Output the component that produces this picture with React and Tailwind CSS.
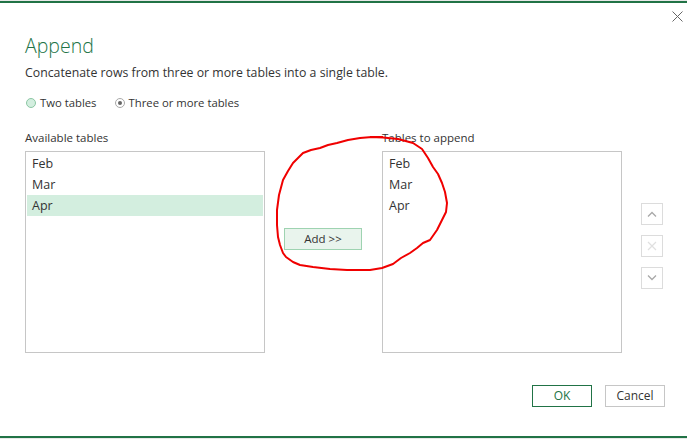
import React from "react";

const font = { fontFamily: '"Open Sans", "Noto Sans", sans-serif' };

function ListBox({ items, selected }) {
  return (
    <div className="h-[202px] w-[240px] border border-[#c6c6c6] bg-white px-[1px] pt-[1px]">
      {items.map((it) => (
        <div
          key={it}
          className={`h-[21px] pl-[5px] text-[12.5px] leading-[21px] text-[#333] ${
            it === selected ? "bg-[#d3eedf]" : ""
          }`}
        >
          {it}
        </div>
      ))}
    </div>
  );
}

function SideButton({ children }) {
  return (
    <div className="flex h-[22px] w-[22px] items-center justify-center border border-[#dcdcdc] bg-white">
      {children}
    </div>
  );
}

export default function App() {
  return (
    <div className="relative h-[439px] w-[687px] overflow-hidden bg-white" style={font}>
      {/* top edge */}
      <div className="h-[1px] bg-[#e8e8e8]" />
      <div className="h-[2px] bg-[#217346]" />

      {/* close */}
      <svg className="absolute left-[672px] top-[11px]" width="11" height="11" viewBox="0 0 11 11">
        <path d="M0.5 0.5 L10.5 10.5 M10.5 0.5 L0.5 10.5" stroke="#666" strokeWidth="1" />
      </svg>

      <div className="px-[25px]">
        <div className="mt-[29px] text-[19.5px] font-light leading-[28px] text-[#217346]">Append</div>
        <div className="mt-[4px] text-[12.3px] leading-[18px] text-[#333]">
          Concatenate rows from three or more tables into a single table.
        </div>

        <div className="mt-[12px] flex items-center text-[11.3px] leading-[18px] text-[#333]">
          <span className="ml-[1px] mr-[4px] inline-block h-[10px] w-[10px] rounded-full border border-[#8cc7a4] bg-[#d3eedf]" />
          <span>Two tables</span>
          <span className="ml-[18px] mr-[4px] flex h-[10px] w-[10px] items-center justify-center rounded-full border border-[#a8a8a8] bg-white">
            <span className="h-[4px] w-[4px] rounded-full bg-[#666]" />
          </span>
          <span>Three or more tables</span>
        </div>

        <div className="mt-[17px] flex">
          <div>
            <div className="mb-[5px] text-[11.5px] leading-[17px] text-[#333]">Available tables</div>
            <ListBox items={["Feb", "Mar", "Apr"]} selected="Apr" />
          </div>
          <div className="ml-[19px] pt-[99px]">
            <div className="flex h-[22px] w-[78px] items-center justify-center border border-[#9ed3b1] bg-[#e9f4ed] text-[11.5px] text-[#333]">
              Add &gt;&gt;
            </div>
          </div>
          <div className="ml-[20px]">
            <div className="mb-[5px] text-[11.5px] leading-[17px] text-[#333]">Tables to append</div>
            <ListBox items={["Feb", "Mar", "Apr"]} />
          </div>
          <div className="ml-[19px] flex flex-col gap-[10px] pt-[74px]">
            <SideButton>
              <svg width="10" height="6" viewBox="0 0 10 6">
                <path d="M1 5.5 L5 1.5 L9 5.5" fill="none" stroke="#a8a8a8" strokeWidth="1.3" />
              </svg>
            </SideButton>
            <SideButton>
              <svg width="10" height="10" viewBox="0 0 10 10">
                <path d="M1 1 L9 9 M9 1 L1 9" stroke="#e0e0e0" strokeWidth="1.2" />
              </svg>
            </SideButton>
            <SideButton>
              <svg width="10" height="6" viewBox="0 0 10 6">
                <path d="M1 0.5 L5 4.5 L9 0.5" fill="none" stroke="#a8a8a8" strokeWidth="1.3" />
              </svg>
            </SideButton>
          </div>
        </div>

        <div className="mt-[32px] flex justify-end gap-[13px]">
          <div className="flex h-[22px] w-[60px] items-center justify-center border border-[#217346] text-[12px] text-[#217346]">
            OK
          </div>
          <div className="mr-[-3px] flex h-[22px] w-[60px] items-center justify-center border border-[#c6c6c6] text-[12px] text-[#333]">
            Cancel
          </div>
        </div>
      </div>

      {/* bottom edge */}
      <div className="absolute left-0 top-[436px] h-[2px] w-full bg-[#217346]" />
      <div className="absolute left-0 top-[438px] h-[1px] w-full bg-[#e8e8e8]" />

      {/* red freehand annotation */}
      <svg className="pointer-events-none absolute left-0 top-0" width="687" height="439" viewBox="0 0 687 439">
        <path
          d="M370 137 L383 137.5 L398 139 L413 143 L422 149 L428 158 L433 167 L438 174 L442 183 L445 192 L447 203 L446 212 L442 220 L437 230 L430 240 L423 243 L417 248 L410 253 L401 258 L393 264 L382 268 L370 270 L347 270 L330 269 L313 267 L300 265 L293 262 L286 257 L283 253 L280 245 L278 237 L277 225 L277 210 L279 195 L283 180 L288 171 L293 163 L298 158 L303 153 L311 150 L320 148 L328 145 L337 143 L348 140 L360 138 L372 137 L383 137"
          fill="none"
          stroke="#f00000"
          strokeWidth="2"
          strokeLinejoin="round"
        />
      </svg>
    </div>
  );
}
